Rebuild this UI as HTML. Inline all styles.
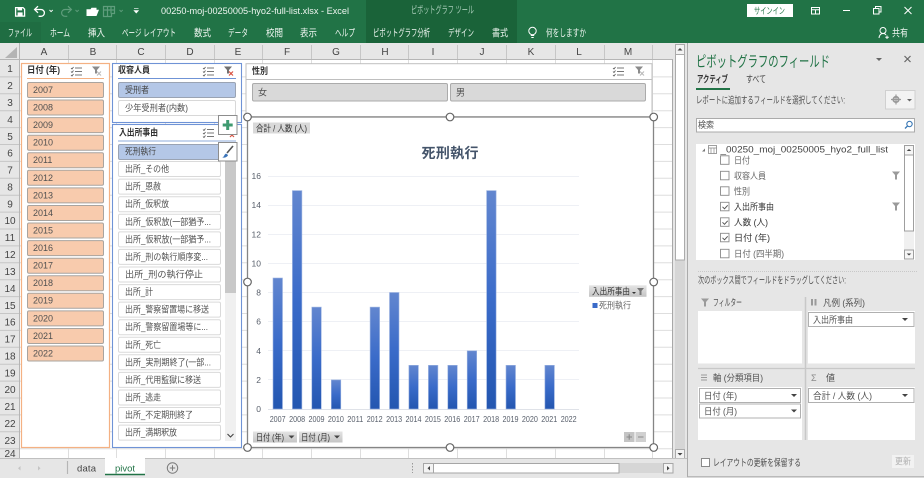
<!DOCTYPE html>
<html lang="ja"><head><meta charset="utf-8"><title>Excel</title>
<style>
html,body{margin:0;padding:0;background:#e6e6e6;width:924px;height:478px;overflow:hidden}
svg{display:block}
text{font-family:"Liberation Sans","Noto Sans CJK JP",sans-serif;font-size:9px;fill:#505050}
.w text{fill:#eef5f0;font-size:10px}
.b{font-weight:bold;fill:#303030}
.hd text{font-size:10px;fill:#444;text-anchor:middle}
.ax text{font-size:8.5px;fill:#59606c}
.p{font-size:9.8px}
</style></head><body>
<svg width="924" height="478" viewBox="0 0 924 478" xmlns="http://www.w3.org/2000/svg">
<defs>
<linearGradient id="bar" x1="0" y1="0" x2="0" y2="1"><stop offset="0" stop-color="#6286cf"/><stop offset=".5" stop-color="#3a6bc9"/><stop offset="1" stop-color="#2356b0"/></linearGradient>
<linearGradient id="chip" x1="0" y1="0" x2="0" y2="1"><stop offset="0" stop-color="#e4e4e4"/><stop offset="1" stop-color="#c4c4c4"/></linearGradient>
<g id="ms" fill="none" stroke="#777" stroke-width="1"><path d="M4 1.500H11M4 5H11M4 8.500H11"/><path d="M0 1.500l1 1 1.500-2M0 5l1 1 1.500-2M0 8.500l1 1 1.500-2" stroke="#555" stroke-width=".8"/></g>
<g id="fc"><path d="M0 0H8L5 3.500V7H3V3.500Z" fill="#8a8a8a"/><path d="M5 5l4 4M9 5l-4 4" stroke="#b9b9b9" stroke-width="1.100"/></g>
<g id="fcr"><path d="M0 0H8L5 3.500V7H3V3.500Z" fill="#707070"/><path d="M5 5l4 4M9 5l-4 4" stroke="#d9503f" stroke-width="1.200"/></g>
<path id="dn" d="M0 0H6L3 3Z" fill="#444"/>
<rect id="cb" width="8.500" height="8.500" fill="#fff" stroke="#8a8a8a" stroke-width=".9"/>
<path id="ft" d="M0 0H8L5 3.500V8H3V3.500Z" fill="#9a9a9a"/>
</defs>

<!-- top bar -->
<rect width="924" height="43" fill="#217346"/>
<rect x="366" width="151" height="43" fill="#1a6339"/>
<rect x="0" y="22" width="41" height="21" fill="#1f6d42"/>
<g fill="none" stroke="#fff" stroke-width="1.300">
<path d="M15.600 7.600h7.400l1.600 1.600v6.900h-9z"/><path d="M34.800 9.500H41a3.400 3.400 0 0 1 0 6.800h-2.400M38 6.200l-3.400 3.300 3.400 3.300"/>
<path d="M49.500 10l1.600 1.600 1.600-1.600" stroke-width=".9"/></g>
<rect x="17.500" y="7.600" width="4.600" height="2.800" fill="#fff"/><rect x="17.600" y="12.400" width="5" height="3.600" fill="#fff"/>
<g fill="none" stroke="#5f9d7c" stroke-width="1.200"><path d="M71 9.500H65a3.400 3.400 0 0 0 0 6.800h2.300M68 6.200l3.400 3.300-3.400 3.300"/>
<path d="M75.500 10l1.600 1.600 1.600-1.600M119.500 10l1.600 1.600 1.600-1.600" stroke-width=".9"/><path d="M103.500 6.500h11v7h-3v3h-8zM103.500 10h11M107.500 6.500v10M111 6.500v7"/></g>
<path d="M86.500 9.200h4l1-1.500h5v2h2.500l-2.500 6.300h-10z" fill="#fff"/>
<path d="M134 8.300h4.500M134 10.500h4.500l-2.250 2.600z" fill="#fff" stroke="#fff" stroke-width=".6"/>

<g class="w">
<text x="161" y="14" textLength="188" lengthAdjust="spacingAndGlyphs" style="font-size:9.500px">00250-moj-00250005-hyo2-full-list.xlsx  -  Excel</text>
<text x="411" y="13.500" textLength="63" lengthAdjust="spacingAndGlyphs" style="fill:#a9cdb9">ピボットグラフ ツール</text>
<text x="8" y="36.500" textLength="24" lengthAdjust="spacingAndGlyphs">ファイル</text>
<text x="50" y="36.500" textLength="20" lengthAdjust="spacingAndGlyphs">ホーム</text>
<text x="88" y="36.500" textLength="17" lengthAdjust="spacingAndGlyphs">挿入</text>
<text x="122" y="36.500" textLength="54" lengthAdjust="spacingAndGlyphs">ページ レイアウト</text>
<text x="194" y="36.500" textLength="17" lengthAdjust="spacingAndGlyphs">数式</text>
<text x="228" y="36.500" textLength="20" lengthAdjust="spacingAndGlyphs">データ</text>
<text x="266" y="36.500" textLength="17" lengthAdjust="spacingAndGlyphs">校閲</text>
<text x="300" y="36.500" textLength="17" lengthAdjust="spacingAndGlyphs">表示</text>
<text x="335" y="36.500" textLength="20" lengthAdjust="spacingAndGlyphs">ヘルプ</text>
<text x="373" y="36.500" textLength="57" lengthAdjust="spacingAndGlyphs">ピボットグラフ分析</text>
<text x="448" y="36.500" textLength="26" lengthAdjust="spacingAndGlyphs">デザイン</text>
<text x="492" y="36.500" textLength="16" lengthAdjust="spacingAndGlyphs">書式</text>
<text x="546" y="36.500" textLength="40" lengthAdjust="spacingAndGlyphs">何をしますか</text>
<text x="892" y="36.500" textLength="16" lengthAdjust="spacingAndGlyphs">共有</text>
</g>
<g fill="none" stroke="#fff" stroke-width="1"><circle cx="532.500" cy="31" r="3.700"/><path d="M530.800 35.500h3.400M531.300 37.500h2.400"/>
<circle cx="883" cy="30.500" r="3"/><path d="M879 38c.5-3.500 2-4.500 4-4.500s2.500.5 3 1.500M887 35.500v3.500M885.300 37.300h3.500"/>
<rect x="811.500" y="7.500" width="8" height="6.500"/><path d="M811.500 9.800h8M815.500 9.800v4"/><path d="M843 10.500h7"/>
<rect x="873.500" y="8.500" width="5.500" height="5.500"/><path d="M875.500 8.500v-2h5.500v5.500h-2"/><path d="M904.500 7l7 7M911.500 7l-7 7"/></g>
<rect x="747" y="4" width="46" height="13" fill="#fff"/>
<text x="754" y="13.800" textLength="31" lengthAdjust="spacingAndGlyphs" style="fill:#217346">サインイン</text>

<!-- sheet -->
<rect x="0" y="43" width="687" height="415" fill="#e6e6e6"/>
<rect x="20" y="60" width="652.500" height="398" fill="#fff"/>
<path d="M20 76.900H672M20 93.800H672M20 110.700H672M20 127.600H672M20 144.500H672M20 161.400H672M20 178.300H672M20 195.200H672M20 212.100H672M20 229H672M20 245.900H672M20 262.800H672M20 279.700H672M20 296.600H672M20 313.500H672M20 330.400H672M20 347.300H672M20 364.200H672M20 381.100H672M20 398H672M20 414.900H672M20 431.800H672M20 448.700H672" stroke="#dedede" stroke-width="1" fill="none"/>
<path d="M68.500 60V458M116.500 60V458M165.500 60V458M214.500 60V458M262.500 60V458M311.500 60V458M360.500 60V458M408.500 60V458M457.500 60V458M506.500 60V458M555.500 60V458M604.500 60V458M652.500 60V458" stroke="#dedede" fill="none"/>
<path d="M672.500 59V458" stroke="#a8a8a8" fill="none"/>
<path d="M0 59.500H672.500M19.500 43V458" stroke="#b5b5b5" fill="none"/>
<path d="M68.500 45V59M116.500 45V59M165.500 45V59M214.500 45V59M262.500 45V59M311.500 45V59M360.500 45V59M408.500 45V59M457.500 45V59M506.500 45V59M555.500 45V59M604.500 45V59M652.500 45V59" stroke="#c6c6c6" fill="none"/>
<path d="M0 76.900H19M0 93.800H19M0 110.700H19M0 127.600H19M0 144.500H19M0 161.400H19M0 178.300H19M0 195.200H19M0 212.100H19M0 229H19M0 245.900H19M0 262.800H19M0 279.700H19M0 296.600H19M0 313.500H19M0 330.400H19M0 347.300H19M0 364.200H19M0 381.100H19M0 398H19M0 414.900H19M0 431.800H19M0 448.700H19" stroke="#c6c6c6" fill="none"/>
<path d="M5 58H17V47Z" fill="#b4b4b4"/>
<g class="hd">
<text x="44" y="55">A</text><text x="93" y="55">B</text><text x="141" y="55">C</text><text x="190" y="55">D</text><text x="238" y="55">E</text><text x="287" y="55">F</text><text x="336" y="55">G</text><text x="385" y="55">H</text><text x="433" y="55">I</text><text x="482" y="55">J</text><text x="531" y="55">K</text><text x="579" y="55">L</text><text x="628" y="55">M</text>
<text x="10" y="72">1</text><text x="10" y="89">2</text><text x="10" y="106">3</text><text x="10" y="123">4</text><text x="10" y="140">5</text><text x="10" y="156.500">6</text><text x="10" y="173.500">7</text><text x="10" y="190.500">8</text><text x="10" y="207.500">9</text><text x="10" y="224">10</text><text x="10" y="241">11</text><text x="10" y="258">12</text><text x="10" y="275">13</text><text x="10" y="292">14</text><text x="10" y="309">15</text><text x="10" y="325.500">16</text><text x="10" y="342.500">17</text><text x="10" y="359.500">18</text><text x="10" y="376.500">19</text><text x="10" y="393">20</text><text x="10" y="410">21</text><text x="10" y="427">22</text><text x="10" y="444">23</text><text x="10" y="457">24</text>
</g>

<!-- vertical scrollbar -->
<rect x="673" y="43" width="14" height="415" fill="#e6e6e6"/>
<rect x="675" y="44" width="10" height="406" fill="#d6d6d6"/>
<rect x="675.500" y="54.500" width="9" height="205.500" fill="#fff" stroke="#ababab"/>
<rect x="675.500" y="44.500" width="9" height="10" fill="#f3f3f3" stroke="#ababab"/>
<rect x="675.500" y="449.500" width="9" height="9" fill="#f3f3f3" stroke="#ababab"/>
<path d="M677.500 50.500h5l-2.500-2.500z" fill="#444"/><path d="M677.500 453h5l-2.500 2.500z" fill="#444"/>

<!-- slicer date -->
<rect x="21.500" y="63.500" width="88" height="384" fill="#fff" stroke="#f4b183" stroke-width="1.200"/>
<text class="b" x="27" y="73" textLength="33" lengthAdjust="spacingAndGlyphs">日付 (年)</text>
<use href="#ms" x="71" y="66.500"/><use href="#fc" x="92" y="66.500"/>
<path d="M27 78.500H104" stroke="#f4b183" fill="none"/>
<g fill="#f8cbad" stroke="#a9a49f" stroke-width="1">
<rect x="27.500" y="82.500" width="76" height="15" rx="1.500"/><rect x="27.500" y="100" width="76" height="15" rx="1.500"/><rect x="27.500" y="117.600" width="76" height="15" rx="1.500"/><rect x="27.500" y="135.200" width="76" height="15" rx="1.500"/><rect x="27.500" y="152.800" width="76" height="15" rx="1.500"/><rect x="27.500" y="170.300" width="76" height="15" rx="1.500"/><rect x="27.500" y="187.900" width="76" height="15" rx="1.500"/><rect x="27.500" y="205.500" width="76" height="15" rx="1.500"/><rect x="27.500" y="223" width="76" height="15" rx="1.500"/><rect x="27.500" y="240.600" width="76" height="15" rx="1.500"/><rect x="27.500" y="258.200" width="76" height="15" rx="1.500"/><rect x="27.500" y="275.700" width="76" height="15" rx="1.500"/><rect x="27.500" y="293.300" width="76" height="15" rx="1.500"/><rect x="27.500" y="310.900" width="76" height="15" rx="1.500"/><rect x="27.500" y="328.500" width="76" height="15" rx="1.500"/><rect x="27.500" y="346" width="76" height="15" rx="1.500"/>
</g>
<g style="fill:#444">
<text x="33" y="93">2007</text><text x="33" y="110.500">2008</text><text x="33" y="128">2009</text><text x="33" y="145.600">2010</text><text x="33" y="163.200">2011</text><text x="33" y="180.800">2012</text><text x="33" y="198.300">2013</text><text x="33" y="215.900">2014</text><text x="33" y="233.500">2015</text><text x="33" y="251">2016</text><text x="33" y="268.600">2017</text><text x="33" y="286.200">2018</text><text x="33" y="303.700">2019</text><text x="33" y="321.300">2020</text><text x="33" y="338.900">2021</text><text x="33" y="356.500">2022</text>
</g>

<!-- slicer 2 -->
<rect x="112.500" y="63.500" width="129" height="59" fill="#fff" stroke="#6f93d6" stroke-width="1.100"/>
<text class="b" x="118" y="73" textLength="32" lengthAdjust="spacingAndGlyphs">収容人員</text>
<use href="#ms" x="203" y="66.500"/><use href="#fcr" x="224" y="66.500"/>
<path d="M118 78.500H236" stroke="#6f93d6" fill="none"/>
<rect x="118.500" y="82.500" width="117" height="15" rx="1.500" fill="#b4c7e7" stroke="#9aa3b3"/>
<text x="125" y="93" textLength="24" lengthAdjust="spacingAndGlyphs" style="fill:#444">受刑者</text>
<rect x="118.500" y="100.500" width="117" height="15" rx="1.500" fill="#fff" stroke="#d8d8d8"/>
<text x="125" y="111" textLength="63" lengthAdjust="spacingAndGlyphs">少年受刑者(内数)</text>

<!-- slicer 3 -->
<rect x="112.500" y="124.500" width="129" height="323" fill="#fff" stroke="#6f93d6" stroke-width="1.100"/>
<text class="b" x="119" y="135.500" textLength="39" lengthAdjust="spacingAndGlyphs">入出所事由</text>
<use href="#ms" x="203" y="128"/><use href="#fcr" x="225" y="128"/>
<path d="M118 141H236" stroke="#b4c7e7" stroke-width="1.500" fill="none"/>
<rect x="225" y="160" width="11" height="281" fill="#f0f0f0"/><rect x="225" y="160" width="11" height="133" fill="#c8c8c8"/>
<path d="M227.500 434l3 3 3-3" fill="none" stroke="#444" stroke-width="1.100"/>
<rect x="118.500" y="144.500" width="105" height="15" rx="1.500" fill="#b4c7e7" stroke="#9aa3b3"/>
<text x="125" y="154.500" textLength="31" lengthAdjust="spacingAndGlyphs" style="fill:#444">死刑執行</text>
<g fill="#fff" stroke="#dadada">
<rect x="118.500" y="161.500" width="102" height="15" rx="1.500"/><rect x="118.500" y="179.100" width="102" height="15" rx="1.500"/><rect x="118.500" y="196.700" width="102" height="15" rx="1.500"/><rect x="118.500" y="214.300" width="102" height="15" rx="1.500"/><rect x="118.500" y="231.900" width="102" height="15" rx="1.500"/><rect x="118.500" y="249.400" width="102" height="15" rx="1.500"/><rect x="118.500" y="267" width="102" height="15" rx="1.500"/><rect x="118.500" y="284.600" width="102" height="15" rx="1.500"/><rect x="118.500" y="302.100" width="102" height="15" rx="1.500"/><rect x="118.500" y="319.700" width="102" height="15" rx="1.500"/><rect x="118.500" y="337.300" width="102" height="15" rx="1.500"/><rect x="118.500" y="354.800" width="102" height="15" rx="1.500"/><rect x="118.500" y="372.400" width="102" height="15" rx="1.500"/><rect x="118.500" y="390" width="102" height="15" rx="1.500"/><rect x="118.500" y="407.500" width="102" height="15" rx="1.500"/><rect x="118.500" y="425.100" width="102" height="15" rx="1.500"/>
</g>
<text x="125" y="172" textLength="44" lengthAdjust="spacingAndGlyphs">出所_その他</text>
<text x="125" y="189.600" textLength="36" lengthAdjust="spacingAndGlyphs">出所_恩赦</text>
<text x="125" y="207.200" textLength="44" lengthAdjust="spacingAndGlyphs">出所_仮釈放</text>
<text x="125" y="224.800" textLength="86" lengthAdjust="spacingAndGlyphs">出所_仮釈放(一部猶予...</text>
<text x="125" y="242.400" textLength="86" lengthAdjust="spacingAndGlyphs">出所_仮釈放(一部猶予...</text>
<text x="125" y="259.900" textLength="83" lengthAdjust="spacingAndGlyphs">出所_刑の執行順序変...</text>
<text x="125" y="277.500" textLength="78" lengthAdjust="spacingAndGlyphs">出所_刑の執行停止</text>
<text x="125" y="295.100" textLength="28" lengthAdjust="spacingAndGlyphs">出所_計</text>
<text x="125" y="312.600" textLength="84" lengthAdjust="spacingAndGlyphs">出所_警察留置場に移送</text>
<text x="125" y="330.200" textLength="83" lengthAdjust="spacingAndGlyphs">出所_警察留置場等に...</text>
<text x="125" y="347.800" textLength="36" lengthAdjust="spacingAndGlyphs">出所_死亡</text>
<text x="125" y="365.300" textLength="86" lengthAdjust="spacingAndGlyphs">出所_実刑期終了(一部...</text>
<text x="125" y="382.900" textLength="76" lengthAdjust="spacingAndGlyphs">出所_代用監獄に移送</text>
<text x="125" y="400.500" textLength="36" lengthAdjust="spacingAndGlyphs">出所_逃走</text>
<text x="125" y="418" textLength="68" lengthAdjust="spacingAndGlyphs">出所_不定期刑終了</text>
<text x="125" y="435.600" textLength="52" lengthAdjust="spacingAndGlyphs">出所_満期釈放</text>

<!-- chart float buttons -->
<rect x="218.500" y="115.500" width="18.500" height="19" fill="#fff" stroke="#8d8d8d"/>
<path d="M227.700 120v10M222.700 125h10" stroke="#3f9a70" stroke-width="3" fill="none"/>
<rect x="218.500" y="142.500" width="18.500" height="18.500" fill="#fff" stroke="#8d8d8d"/>
<path d="M233 146l-6 7" stroke="#555" stroke-width="1.600" fill="none"/><path d="M222 157.500c2 0 2-3 4-4l2 1.500c-.5 2-3 3-6 2.500z" fill="#3a73b8"/>

<!-- gender slicer -->
<rect x="246" y="63.700" width="406" height="53" fill="#fff" stroke="#bfbfbf"/>
<text class="b" x="252" y="74" textLength="16" lengthAdjust="spacingAndGlyphs">性別</text>
<use href="#ms" x="613" y="66.500"/><use href="#fc" x="635" y="66.500"/>
<path d="M246 79.500H652" stroke="#bfbfbf" fill="none"/>
<rect x="252.500" y="83.500" width="195" height="17.500" rx="1.500" fill="#d9d9d9" stroke="#ababab"/>
<rect x="450.500" y="83.500" width="195" height="17.500" rx="1.500" fill="#d9d9d9" stroke="#ababab"/>
<text x="258" y="95.500">女</text><text x="456" y="95.500">男</text>

<!-- chart -->
<rect x="247.500" y="117" width="406" height="330.500" fill="#fff" stroke="#858585" stroke-width="1.300"/>
<rect x="253" y="122.500" width="57" height="11" fill="#d9d9d9"/>
<text x="256" y="131.500" textLength="51" lengthAdjust="spacingAndGlyphs" style="fill:#333">合計 / 人数 (人)</text>
<text x="421.500" y="158" textLength="57" style="font-size:14px;font-weight:bold;fill:#44546a">死刑執行</text>
<path d="M268 176.500H579M268 205.500H579M268 234.500H579M268 263.500H579M268 292.500H579M268 321.500H579M268 350.500H579M268 379.500H579" stroke="#eef0f5" stroke-width="1" fill="none"/>
<path d="M268 409.500H579" stroke="#dfe2e8" fill="none"/>
<g fill="url(#bar)" stroke="#9db4e2" stroke-width=".6">
<rect x="273" y="278" width="9.500" height="131"/><rect x="292.400" y="190.600" width="9.500" height="218.400"/><rect x="311.800" y="307.100" width="9.500" height="101.900"/><rect x="331.300" y="379.900" width="9.500" height="29.100"/><rect x="370.100" y="307.100" width="9.500" height="101.900"/><rect x="389.500" y="292.500" width="9.500" height="116.500"/><rect x="408.900" y="365.300" width="9.500" height="43.700"/><rect x="428.400" y="365.300" width="9.500" height="43.700"/><rect x="447.800" y="365.300" width="9.500" height="43.700"/><rect x="467.200" y="350.800" width="9.500" height="58.200"/><rect x="486.600" y="190.600" width="9.500" height="218.400"/><rect x="506" y="365.300" width="9.500" height="43.700"/><rect x="544.900" y="365.300" width="9.500" height="43.700"/>
</g>
<g class="ax" text-anchor="end">
<text x="261" y="179">16</text><text x="261" y="208">14</text><text x="261" y="237.500">12</text><text x="261" y="266.500">10</text><text x="261" y="295.500">8</text><text x="261" y="324.500">6</text><text x="261" y="354">4</text><text x="261" y="383">2</text><text x="261" y="412">0</text>
</g>
<g class="ax">
<text x="269.700" y="422" textLength="16" lengthAdjust="spacingAndGlyphs">2007</text><text x="289.100" y="422" textLength="16" lengthAdjust="spacingAndGlyphs">2008</text><text x="308.500" y="422" textLength="16" lengthAdjust="spacingAndGlyphs">2009</text><text x="327.900" y="422" textLength="16" lengthAdjust="spacingAndGlyphs">2010</text><text x="347.300" y="422" textLength="16" lengthAdjust="spacingAndGlyphs">2011</text><text x="366.700" y="422" textLength="16" lengthAdjust="spacingAndGlyphs">2012</text><text x="386.100" y="422" textLength="16" lengthAdjust="spacingAndGlyphs">2013</text><text x="405.500" y="422" textLength="16" lengthAdjust="spacingAndGlyphs">2014</text><text x="424.900" y="422" textLength="16" lengthAdjust="spacingAndGlyphs">2015</text><text x="444.300" y="422" textLength="16" lengthAdjust="spacingAndGlyphs">2016</text><text x="463.700" y="422" textLength="16" lengthAdjust="spacingAndGlyphs">2017</text><text x="483.100" y="422" textLength="16" lengthAdjust="spacingAndGlyphs">2018</text><text x="502.500" y="422" textLength="16" lengthAdjust="spacingAndGlyphs">2019</text><text x="521.900" y="422" textLength="16" lengthAdjust="spacingAndGlyphs">2020</text><text x="541.300" y="422" textLength="16" lengthAdjust="spacingAndGlyphs">2021</text><text x="560.700" y="422" textLength="16" lengthAdjust="spacingAndGlyphs">2022</text>
</g>
<rect x="253" y="431.500" width="44" height="11" fill="url(#chip)"/><rect x="299" y="431.500" width="43.500" height="11" fill="url(#chip)"/>
<text x="256" y="440.500" textLength="28" lengthAdjust="spacingAndGlyphs" style="fill:#333">日付 (年)</text>
<text x="301" y="440.500" textLength="29" lengthAdjust="spacingAndGlyphs" style="fill:#333">日付 (月)</text>
<use href="#dn" x="288.500" y="435.500"/><use href="#dn" x="334" y="435.500"/>
<rect x="589" y="285.300" width="57.500" height="11.500" fill="url(#chip)"/>
<text x="592" y="294.500" textLength="38" lengthAdjust="spacingAndGlyphs" style="fill:#333">入出所事由</text>
<path d="M632 292h4l-2 2z" fill="#333"/><path d="M637 288H644L641.500 291V295H639.500V291Z" fill="#777"/>
<rect x="592.500" y="303" width="5" height="5" fill="#3a6bc9"/>
<text x="599" y="308.500" textLength="32" lengthAdjust="spacingAndGlyphs" style="fill:#666">死刑執行</text>
<rect x="624" y="432" width="10.500" height="10" fill="#c4c4c4"/><rect x="635.500" y="432" width="10.500" height="10" fill="#d0d0d0"/>
<path d="M626.500 437h5.500M629.200 434.300v5.500M638 437h5.500" stroke="#8a8a8a" stroke-width="1.100" fill="none"/>
<g fill="#fff" stroke="#666" stroke-width="1.200">
<circle cx="247.500" cy="117" r="3.800"/><circle cx="450" cy="117" r="3.800"/><circle cx="653.700" cy="117" r="3.800"/><circle cx="247.500" cy="282" r="3.800"/><circle cx="653.700" cy="282" r="3.800"/><circle cx="247.500" cy="447.500" r="3.800"/><circle cx="450" cy="447.500" r="3.800"/><circle cx="653.700" cy="447.500" r="3.800"/>
</g>

<!-- sheet tabs -->
<rect x="0" y="458" width="687" height="20" fill="#e6e6e6"/>
<path d="M0 458.500H105M145 458.500H687" stroke="#c0c0c0" fill="none"/>
<path d="M20.500 466v4.500l-2.500-2.250zM38 466v4.500l2.500-2.250z" fill="#c4c4c4"/>
<path d="M67.500 461V474" stroke="#b5b5b5" stroke-width="1.200" fill="none"/>
<text x="77" y="471.500" textLength="19" style="fill:#444;font-size:9.500px">data</text>
<rect x="105" y="458" width="40" height="16.500" fill="#fff"/>
<path d="M105 474.500H145" stroke="#217346" stroke-width="1.500" fill="none"/>
<text x="115" y="471.500" textLength="20" style="fill:#217346;font-size:9.500px">pivot</text>
<circle cx="172.500" cy="468" r="5.200" fill="none" stroke="#7a7a7a"/><path d="M169.800 468h5.400M172.500 465.300v5.400" stroke="#7a7a7a" fill="none"/>
<path d="M412.500 463v1.500M412.500 466v1.500M412.500 469v1.500M412.500 472v1" stroke="#999" fill="none"/>
<rect x="423" y="463" width="250" height="10" fill="#d6d6d6"/>
<rect x="433.500" y="463.500" width="185.500" height="9.500" fill="#fff" stroke="#a6a6a6"/>
<rect x="423.500" y="463.500" width="10" height="9.500" fill="#f3f3f3" stroke="#a6a6a6"/>
<rect x="663.500" y="463.500" width="9.500" height="9.500" fill="#f3f3f3" stroke="#a6a6a6"/>
<path d="M430 466v4.500l-2.500-2.250zM667 466v4.500l2.500-2.250z" fill="#444"/>

<!-- panel -->
<rect x="687" y="43" width="237" height="435" fill="#e6e6e6"/>
<path d="M687.500 43V477M687 476.800H924" stroke="#ababab" fill="none"/>
<text x="696" y="66.500" textLength="134" lengthAdjust="spacingAndGlyphs" style="font-size:15px;fill:#217346">ピボットグラフのフィールド</text>
<path d="M876 58h6l-3 3z" fill="#666"/><path d="M904.500 56l6 6M910.500 56l-6 6" stroke="#666" stroke-width="1.200" fill="none"/>
<text class="b p" x="697" y="82.500" textLength="31" lengthAdjust="spacingAndGlyphs">アクティブ</text>
<text class="p" x="746" y="82.500" textLength="20" lengthAdjust="spacingAndGlyphs" style="fill:#444">すべて</text>
<rect x="696" y="88" width="34" height="2" fill="#217346"/>
<text class="p" x="696" y="103.500" textLength="149" lengthAdjust="spacingAndGlyphs">レポートに追加するフィールドを選択してください:</text>
<rect x="885.500" y="90.500" width="29.500" height="18.500" fill="#f3f3f3" stroke="#d0d0d0"/>
<circle cx="896" cy="99.500" r="2.700" fill="none" stroke="#9a9a9a" stroke-width="1.800"/><path d="M896 94.500v10M891 99.500h10" stroke="#9a9a9a" stroke-width="1.200" fill="none"/>
<path d="M907 99h5l-2.500 2.500z" fill="#666"/>
<rect x="696.500" y="118.500" width="218" height="13.500" fill="#fff" stroke="#ababab"/>
<text x="698" y="128" textLength="16" lengthAdjust="spacingAndGlyphs">検索</text>
<circle cx="909.500" cy="124" r="2.700" fill="none" stroke="#3a78b5" stroke-width="1.100"/><path d="M907.500 126l-2.500 2.500" stroke="#3a78b5" stroke-width="1.300" fill="none"/>

<rect x="696" y="144" width="219" height="116" fill="#fff"/>
<path d="M702 151.500h3v-3z" fill="#777"/>
<rect x="708.500" y="145.500" width="8" height="8" fill="none" stroke="#888" stroke-width=".8"/><path d="M708.500 148h8M711 148v5.500M714 148v5.500" stroke="#888" stroke-width=".7" fill="none"/>
<text x="720.500" y="152.500" textLength="167.500" style="fill:#444;font-size:9.500px" lengthAdjust="spacingAndGlyphs">_00250_moj_00250005_hyo2_full_list</text>
<rect x="904" y="155" width="10" height="95" fill="#f0f0f0"/>
<rect x="904.500" y="155" width="9" height="76" fill="#fff" stroke="#9f9f9f"/>
<rect x="904.500" y="145.500" width="9" height="9.500" fill="#f6f6f6" stroke="#9f9f9f"/><rect x="904.500" y="250" width="9" height="9" fill="#f6f6f6" stroke="#9f9f9f"/>
<path d="M906.700 151h4.600l-2.300-2zM906.700 253.500h4.600l-2.300 2z" fill="#444"/>
<use href="#cb" x="720.500" y="155.800"/><use href="#cb" x="720.500" y="171.300"/><use href="#cb" x="720.500" y="186.800"/><use href="#cb" x="720.500" y="202.300"/><use href="#cb" x="720.500" y="217.800"/><use href="#cb" x="720.500" y="233.300"/><use href="#cb" x="720.500" y="249.300"/>
<path d="M722.500 206.800l2 2 3.200-3.500M722.500 222.300l2 2 3.200-3.500M722.500 237.800l2 2 3.200-3.500" stroke="#555" fill="none"/>
<text x="734" y="163.500" textLength="16" lengthAdjust="spacingAndGlyphs" style="fill:#666">日付</text>
<text x="734" y="179" textLength="32" lengthAdjust="spacingAndGlyphs" style="fill:#666">収容人員</text>
<text x="734" y="194.500" textLength="16" lengthAdjust="spacingAndGlyphs" style="fill:#666">性別</text>
<text x="734" y="210" textLength="40" lengthAdjust="spacingAndGlyphs" style="fill:#333">入出所事由</text>
<text x="734" y="225.500" textLength="34" lengthAdjust="spacingAndGlyphs" style="fill:#333">人数 (人)</text>
<text x="734" y="241" textLength="36" lengthAdjust="spacingAndGlyphs" style="fill:#333">日付 (年)</text>
<text x="734" y="257" textLength="50" lengthAdjust="spacingAndGlyphs" style="fill:#666">日付 (四半期)</text>
<use href="#ft" x="892" y="171.500"/><use href="#ft" x="892" y="202.500"/>
<path d="M698 271.500H917" stroke="#c8c8c8" stroke-dasharray="1 1" fill="none"/>
<text class="p" x="698" y="283.500" textLength="148" lengthAdjust="spacingAndGlyphs">次のボックス間でフィールドをドラッグしてください:</text>

<use href="#ft" x="701" y="298.500"/>
<text class="p" x="713" y="306" textLength="29" lengthAdjust="spacingAndGlyphs">フィルター</text>
<path d="M812 299v6.500M815.500 299v6.500" stroke="#9a9a9a" stroke-width="2" fill="none"/>
<text x="823" y="306" textLength="42" lengthAdjust="spacingAndGlyphs">凡例 (系列)</text>
<path d="M701 375h6M701 377.500h6M701 380h6" stroke="#9a9a9a" fill="none"/>
<text x="713" y="381" textLength="50" lengthAdjust="spacingAndGlyphs">軸 (分類項目)</text>
<text x="811" y="381" style="fill:#8a8a8a">Σ</text>
<text x="826" y="381" textLength="9" lengthAdjust="spacingAndGlyphs">値</text>
<rect x="698" y="311" width="104" height="52.500" fill="#fff"/><rect x="808" y="311" width="107" height="52.500" fill="#fff"/>
<rect x="698" y="387" width="104" height="53" fill="#fff"/><rect x="808" y="387" width="107" height="53" fill="#fff"/>
<path d="M805.500 297V440" stroke="#c8c8c8" stroke-width="1.500" fill="none"/><path d="M698 368.500H915" stroke="#c8c8c8" stroke-width="1.200" fill="none"/>
<g fill="#fff" stroke="#b0b0b0">
<rect x="808.500" y="312.500" width="105.500" height="14"/><rect x="699.500" y="388.500" width="101" height="14"/><rect x="699.500" y="404" width="101" height="14"/><rect x="808.500" y="388.500" width="105.500" height="14"/>
</g>
<text x="813" y="323" textLength="40" lengthAdjust="spacingAndGlyphs">入出所事由</text>
<text x="704" y="399" textLength="33" lengthAdjust="spacingAndGlyphs">日付 (年)</text>
<text x="704" y="414.500" textLength="33" lengthAdjust="spacingAndGlyphs">日付 (月)</text>
<text x="813" y="399" textLength="59" lengthAdjust="spacingAndGlyphs">合計 / 人数 (人)</text>
<use href="#dn" x="902" y="318"/><use href="#dn" x="791" y="394"/><use href="#dn" x="791" y="409.500"/><use href="#dn" x="902" y="394"/>
<rect x="701.500" y="458.500" width="8" height="8" fill="#fff" stroke="#8a8a8a"/>
<text class="p" x="713" y="466" textLength="88" lengthAdjust="spacingAndGlyphs">レイアウトの更新を保留する</text>
<rect x="892" y="455" width="22" height="13" fill="#f2f2f2"/>
<text x="895" y="464.500" textLength="16" lengthAdjust="spacingAndGlyphs" style="fill:#b2b2b2">更新</text>
</svg>
</body></html>
